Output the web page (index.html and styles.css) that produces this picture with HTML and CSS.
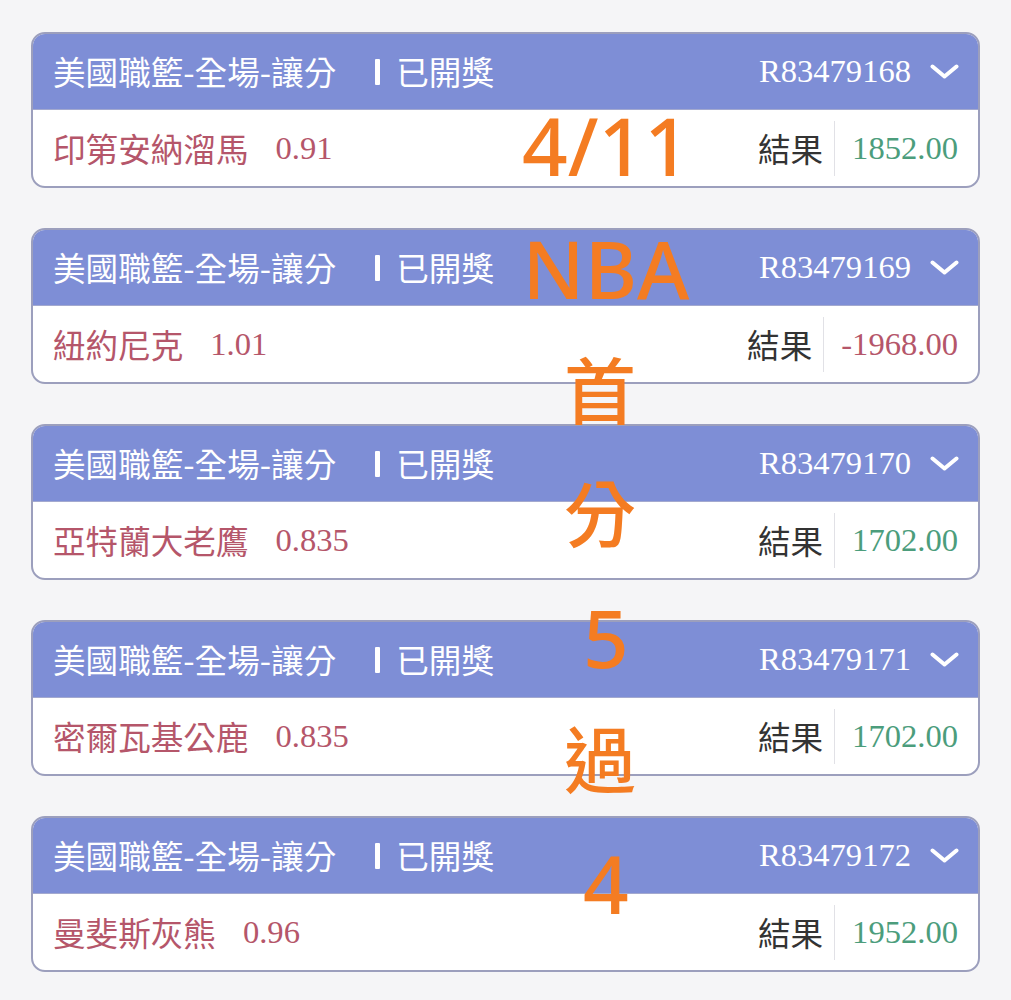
FILE: index.html
```html
<!DOCTYPE html>
<html lang="zh-Hant">
<head>
  <meta charset="UTF-8">
  <title>注單紀錄</title>
  <link rel="stylesheet" href="styles.css">
</head>
<body>
<div class="list">
  <div class="card">
    <div class="card-head">
      <span class="league">美國職籃-全場-讓分</span>
      <span class="bar"></span>
      <span class="status">已開獎</span>
      <span class="order">R83479168</span>
      <svg class="chevron" viewBox="0 0 29 15"><polyline points="2.5,2.5 14.5,12.5 26.5,2.5"/></svg>
    </div>
    <div class="card-body">
      <span class="team">印第安納溜馬</span>
      <span class="odds">0.91</span>
      <span class="result-label">結果</span>
      <span class="amount win">1852.00</span>
    </div>
  </div>

  <div class="card">
    <div class="card-head">
      <span class="league">美國職籃-全場-讓分</span>
      <span class="bar"></span>
      <span class="status">已開獎</span>
      <span class="order">R83479169</span>
      <svg class="chevron" viewBox="0 0 29 15"><polyline points="2.5,2.5 14.5,12.5 26.5,2.5"/></svg>
    </div>
    <div class="card-body">
      <span class="team">紐約尼克</span>
      <span class="odds">1.01</span>
      <span class="result-label">結果</span>
      <span class="amount lose">-1968.00</span>
    </div>
  </div>

  <div class="card">
    <div class="card-head">
      <span class="league">美國職籃-全場-讓分</span>
      <span class="bar"></span>
      <span class="status">已開獎</span>
      <span class="order">R83479170</span>
      <svg class="chevron" viewBox="0 0 29 15"><polyline points="2.5,2.5 14.5,12.5 26.5,2.5"/></svg>
    </div>
    <div class="card-body">
      <span class="team">亞特蘭大老鷹</span>
      <span class="odds">0.835</span>
      <span class="result-label">結果</span>
      <span class="amount win">1702.00</span>
    </div>
  </div>

  <div class="card">
    <div class="card-head">
      <span class="league">美國職籃-全場-讓分</span>
      <span class="bar"></span>
      <span class="status">已開獎</span>
      <span class="order">R83479171</span>
      <svg class="chevron" viewBox="0 0 29 15"><polyline points="2.5,2.5 14.5,12.5 26.5,2.5"/></svg>
    </div>
    <div class="card-body">
      <span class="team">密爾瓦基公鹿</span>
      <span class="odds">0.835</span>
      <span class="result-label">結果</span>
      <span class="amount win">1702.00</span>
    </div>
  </div>

  <div class="card">
    <div class="card-head">
      <span class="league">美國職籃-全場-讓分</span>
      <span class="bar"></span>
      <span class="status">已開獎</span>
      <span class="order">R83479172</span>
      <svg class="chevron" viewBox="0 0 29 15"><polyline points="2.5,2.5 14.5,12.5 26.5,2.5"/></svg>
    </div>
    <div class="card-body">
      <span class="team">曼斐斯灰熊</span>
      <span class="odds">0.96</span>
      <span class="result-label">結果</span>
      <span class="amount win">1952.00</span>
    </div>
  </div>
</div>

<div class="stamp">
  <div class="stamp-line">4/11</div>
  <div class="stamp-line">NBA</div>
  <div class="stamp-line cjk">首</div>
  <div class="stamp-line cjk">分</div>
  <div class="stamp-line">5</div>
  <div class="stamp-line cjk">過</div>
  <div class="stamp-line">4</div>
</div>
</body>
</html>
```

FILE: styles.css
```css
html {
    --page-bg: #f5f5f7;
    --head-bg: #7e8ed6;
    --card-border: #9c9fbd;
    --text-red: #b5566a;
    --text-green: #4c9d7c;
    --text-dark: #333333;
    --orange: #f47c22;
}

body {
    margin: 0;
    background: var(--page-bg);
    font-family: "Noto Sans CJK TC", "Noto Sans", sans-serif;
}

.list {
    display: flex;
    flex-direction: column;
    gap: 40px;
    padding: 32px 31px;
}

.card {
    border: 2px solid var(--card-border);
    border-radius: 14px;
    overflow: hidden;
    background: #ffffff;
}

.card-head {
    display: flex;
    align-items: center;
    height: 75px;
    padding: 0 19px 0 20px;
    background: var(--head-bg);
    border-bottom: 1px solid #a3a9cf;
    color: #ffffff;
}

.league, .status, .team, .result-label {
    font-size: 32.6px;
    line-height: 1;
}

.bar {
    width: 5px;
    height: 26px;
    margin: 0 16px 0 39px;
    background: #ffffff;
    border-radius: 1px;
}

.order, .odds, .amount {
    font-family: "Liberation Serif", serif;
    font-size: 32.6px;
    line-height: 1;
}

.order {
    margin-left: auto;
}

.chevron {
    width: 29px;
    height: 15px;
    margin-left: 19px;
    fill: none;
    stroke: #ffffff;
    stroke-width: 4;
    stroke-linecap: round;
    stroke-linejoin: round;
}

.card-body {
    display: flex;
    align-items: center;
    height: 76px;
    padding: 0 20px;
}

.team {
    color: var(--text-red);
}

.odds {
    margin-left: 27px;
    color: var(--text-red);
}

.result-label {
    margin-left: auto;
    color: var(--text-dark);
}

.amount {
    align-self: stretch;
    display: flex;
    align-items: center;
    margin: 11px 0 10px 11px;
    padding-left: 17px;
    border-left: 1.5px solid #e1e1e6;
}

.amount.win {
    color: var(--text-green);
}

.amount.lose {
    color: var(--text-red);
}

.stamp {
    position: absolute;
    top: 83px;
    left: 506px;
    width: 200px;
    text-align: center;
    color: var(--orange);
    font-family: "Noto Sans", "Noto Sans CJK TC", sans-serif;
    font-weight: 500;
    pointer-events: none;
}

.stamp-line {
    height: 123px;
    font-size: 80px;
    line-height: 123px;
}

.stamp-line.cjk {
    padding-right: 12px;
    font-size: 72px;
}
```
